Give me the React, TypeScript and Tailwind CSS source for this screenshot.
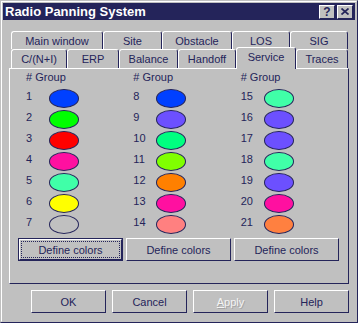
import React from "react";

const navy = "#24245a";

type Item = { n: number; c: string };

const cols: Item[][] = [
  [
    { n: 1, c: "bg-[#0040ff]" },
    { n: 2, c: "bg-[#00ff00]" },
    { n: 3, c: "bg-[#ff0000]" },
    { n: 4, c: "bg-[#ff10a0]" },
    { n: 5, c: "bg-[#40ffa8]" },
    { n: 6, c: "bg-[#ffff00]" },
    { n: 7, c: "bg-transparent" },
  ],
  [
    { n: 8, c: "bg-[#0040ff]" },
    { n: 9, c: "bg-[#6c50ff]" },
    { n: 10, c: "bg-[#00ff80]" },
    { n: 11, c: "bg-[#80ff00]" },
    { n: 12, c: "bg-[#ff8000]" },
    { n: 13, c: "bg-[#ff10a0]" },
    { n: 14, c: "bg-[#ff8080]" },
  ],
  [
    { n: 15, c: "bg-[#40ffa8]" },
    { n: 16, c: "bg-[#6c50ff]" },
    { n: 17, c: "bg-[#6c50ff]" },
    { n: 18, c: "bg-[#40ffa8]" },
    { n: 19, c: "bg-[#6c50ff]" },
    { n: 20, c: "bg-[#ff10a0]" },
    { n: 21, c: "bg-[#ff8040]" },
  ],
];

function Tab({ label, w, selected }: { label: string; w: string; selected?: boolean }) {
  return (
    <div
      className={`${w} ${
        selected ? "h-[22px] -mb-[1px] relative z-10 pb-[3px]" : "h-full"
      } shrink-0 bg-[#c0c0c0] border-t border-l border-r border-t-white border-l-white border-r-[#24245a] rounded-tl-[3px] rounded-tr-[3px] flex items-center justify-center leading-[14px]`}
    >
      {label}
    </div>
  );
}

function Btn({
  children,
  w,
  def,
  disabled,
}: {
  children: React.ReactNode;
  w: string;
  def?: boolean;
  disabled?: boolean;
}) {
  if (def) {
    return (
      <div className={`${w} h-[23px] border border-[#24245a] flex`}>
        <div className="flex-1 border border-t-white border-l-white border-r-[#24245a] border-b-[#24245a] p-[1px] flex">
          <div className="flex-1 border border-dotted border-[#24245a] flex items-center justify-center leading-[14px]">
            {children}
          </div>
        </div>
      </div>
    );
  }
  return (
    <div
      className={`${w} h-[23px] border border-t-white border-l-white border-r-[#24245a] border-b-[#24245a] flex items-center justify-center leading-[14px] ${
        disabled ? "text-[#f4f4f4] [text-shadow:1px_1px_0_#a4a4a4]" : ""
      }`}
    >
      {children}
    </div>
  );
}

export default function App() {
  return (
    <div
      className="w-[358px] h-[323px] bg-[#c0c0c0] text-[11px] text-[#24245a] border border-t-[#c0c0c0] border-l-[#c0c0c0] border-r-[#24245a] border-b-[#24245a] overflow-hidden"
      style={{ fontFamily: '"Liberation Sans", Arial, sans-serif' }}
    >
      <div className="h-full border border-t-white border-l-white border-r-[#c0c0c0] border-b-[#c0c0c0] p-[1px] flex flex-col">
        {/* Title bar */}
        <div className="h-[17px] shrink-0 bg-[#24245a] flex items-center pl-[2px] pr-[2px]">
          <div className="flex-1 text-white font-bold text-[13px] leading-[15px]">
            Radio Panning System
          </div>
          <div className="flex gap-[2px]">
            <div className="w-[16px] h-[14px] bg-[#c0c0c0] border border-t-white border-l-white border-r-[#24245a] border-b-[#24245a] flex items-center justify-center font-bold text-[12px] leading-[12px] text-[#24245a]">
              ?
            </div>
            <div className="w-[16px] h-[14px] bg-[#c0c0c0] border border-t-white border-l-white border-r-[#24245a] border-b-[#24245a] flex items-center justify-center">
              <svg width="8" height="7" viewBox="0 0 8 7">
                <path d="M0.5 0.5 L7.5 6.5 M7.5 0.5 L0.5 6.5" stroke={navy} strokeWidth="1.7" />
              </svg>
            </div>
          </div>
        </div>

        {/* Body */}
        <div className="px-[6px] flex flex-col">
          {/* Tabs */}
          <div className="mt-[11px] pl-[2px] flex flex-col">
            <div className="h-[18px] flex">
              <Tab label="Main window" w="w-[92px]" />
              <Tab label="Site" w="w-[59px]" />
              <Tab label="Obstacle" w="w-[70px]" />
              <Tab label="LOS" w="w-[58px]" />
              <Tab label="SIG" w="w-[58px]" />
            </div>
            <div className="h-[19px] flex items-end">
              <Tab label="C/(N+I)" w="w-[56px]" />
              <Tab label="ERP" w="w-[52px]" />
              <Tab label="Balance" w="w-[59px]" />
              <Tab label="Handoff" w="w-[58px]" />
              <Tab label="Service" w="w-[60px]" selected />
              <Tab label="Traces" w="w-[52px]" />
            </div>
          </div>

          {/* Panel */}
          <div className="h-[216px] border border-t-white border-l-white border-r-[#24245a] border-b-[#24245a] flex flex-col">
            <div className="pl-[16px] pt-[1px] flex">
              {cols.map((col, i) => (
                <div key={i} className="w-[108px] flex flex-col">
                  <div className="leading-[14px] h-[14px]"># Group</div>
                  <div className="mt-[5px] flex flex-col gap-[2px]">
                    {col.map((it) => (
                      <div key={it.n} className="flex items-start h-[19px]">
                        <div className="w-[23px] leading-[14px]">{it.n}</div>
                        <div
                          className={`w-[30px] h-[19px] rounded-[50%] border border-[#24245a] ${it.c}`}
                        />
                      </div>
                    ))}
                  </div>
                </div>
              ))}
            </div>
            <div className="mt-[4px] ml-[8px] flex gap-[3px]">
              <Btn w="w-[105px]" def>
                Define colors
              </Btn>
              <Btn w="w-[105px]">Define colors</Btn>
              <Btn w="w-[105px]">Define colors</Btn>
            </div>
          </div>

          {/* Bottom buttons */}
          <div className="mt-[6px] flex justify-end gap-[6px]">
            <Btn w="w-[75px]">OK</Btn>
            <Btn w="w-[75px]">Cancel</Btn>
            <Btn w="w-[75px]" disabled>
              <span className="underline">A</span>pply
            </Btn>
            <Btn w="w-[75px]">Help</Btn>
          </div>
        </div>
      </div>
    </div>
  );
}
